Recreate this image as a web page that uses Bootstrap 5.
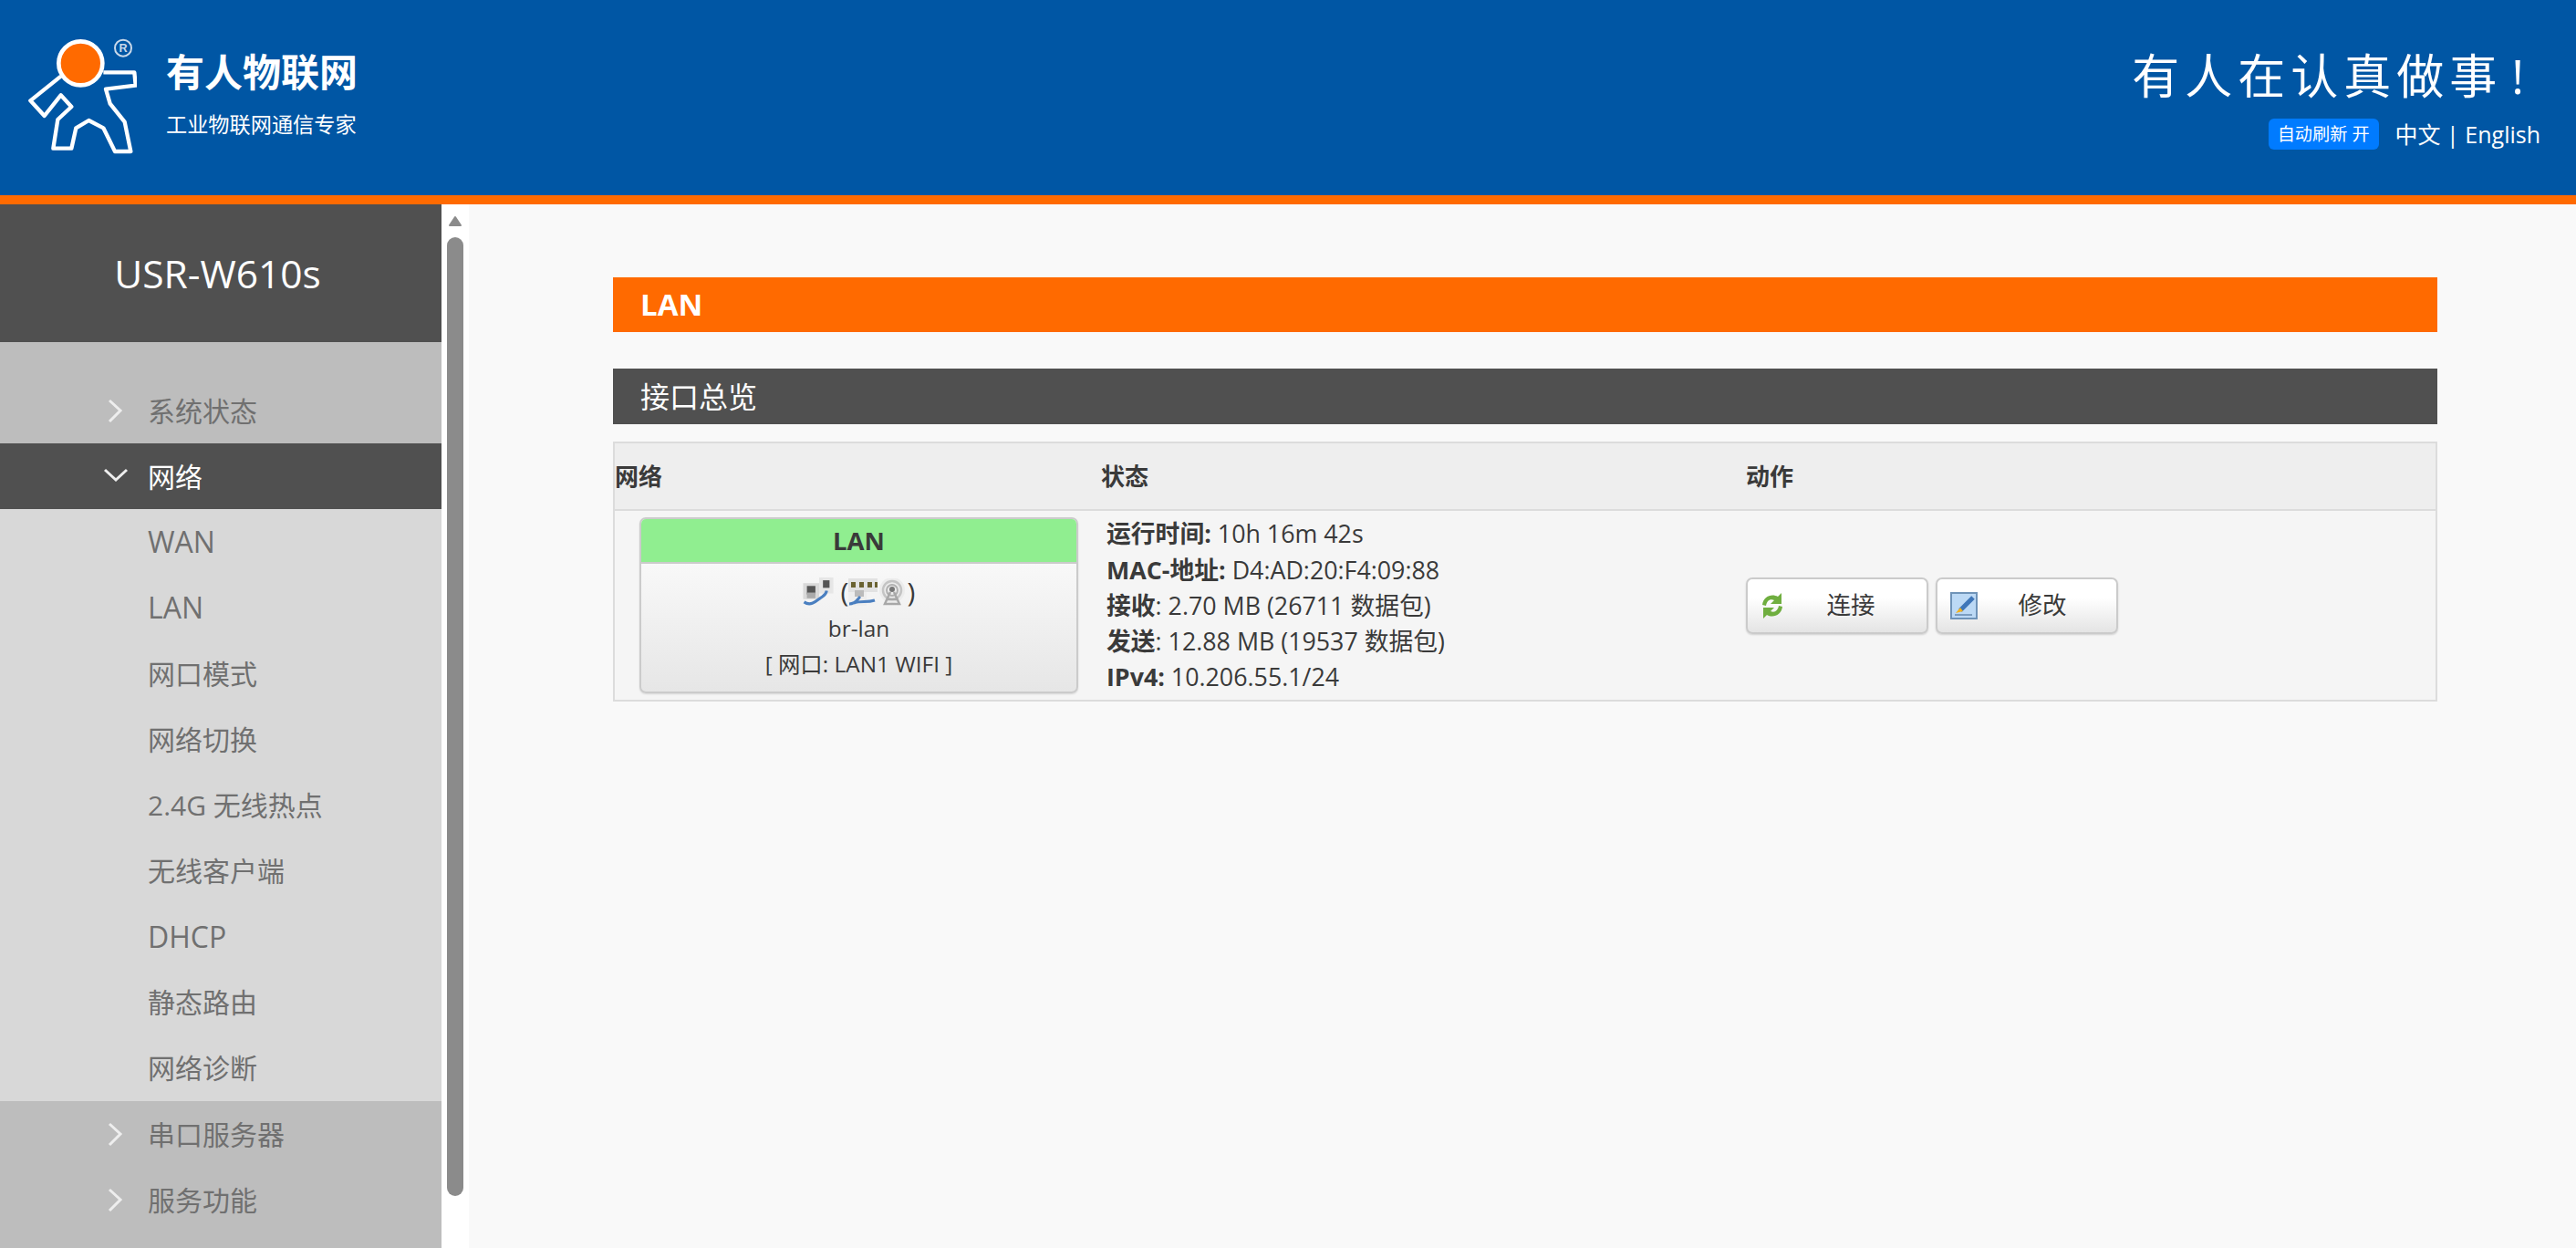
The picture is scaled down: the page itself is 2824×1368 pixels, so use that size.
<!DOCTYPE html>
<html lang="zh-CN">
<head>
    <meta charset="UTF-8">
    <title>USR-W610s - LAN</title>
    <meta name="viewport" content="width=device-width, initial-scale=1">
    <link href="https://cdn.jsdelivr.net/npm/bootstrap@5.3.3/dist/css/bootstrap.min.css" rel="stylesheet">
    <style>
        body {
            background: #f9f9f9;
            font-family: "Open Sans", "Noto Sans CJK SC", sans-serif;
            color: #3a3a3a;
            height: 100vh;
            overflow: hidden;
        }
        .top-bar {
            height: 224px;
            background: #0056a4;
            border-bottom: 10px solid #ff6a00;
            color: #fff;
        }
        .logo-box { padding: 42px 0 0 30px; }
        .logo-text { margin-left: 32px; padding-top: 6px; }
        .logo-name { font-size: 42px; font-weight: 700; line-height: 58px; font-family: "Noto Sans CJK SC", sans-serif; }
        .logo-sub { font-size: 23.2px; line-height: 30px; margin-top: 14px; font-family: "Noto Sans CJK SC", sans-serif; }
        .slogan-box { padding: 48px 39px 0 0; }
        .slogan { font-size: 52px; line-height: 70px; letter-spacing: 6px; margin-right: 12px; }
        .slogan-mark { margin-left: 10px; }
        .refresh-tag {
            background: #007bff;
            border-radius: 6px;
            font-size: 19.2px;
            line-height: 34px;
            height: 34px;
            padding: 0 10px;
        }
        .lang-links { font-size: 25px; line-height: 34px; margin-left: 18px; }
        .top-row { margin-top: 12px; }
        .page-body { height: calc(100vh - 224px); }
        .side-menu { width: 484px; background: #bdbdbd; flex: none; }
        .side-title {
            height: 151px;
            padding-right: 7px;
            background: #505050;
            color: #fff;
            font-size: 42.5px;
        }
        .side-list { padding-top: 39px; }
        .menu-row {
            height: 72.1px;
            color: #707070;
            font-size: 30px;
            padding-left: 162px;
            position: relative;
        }
        .menu-row svg { position: absolute; left: 112px; top: 22px; }
        .menu-row.opened { background: #505050; color: #fff; }
        .menu-sub { background: #d8d8d8; }
        .latin-item { font-size: 32px; }
        .scroll-track { width: 30px; background: #fff; flex: none; padding: 12px 0 0 6px; }
        .scroll-up { width: 18px; height: 14px; display: block; }
        .scroll-thumb { width: 18px; height: 1051px; background: #8b8b8b; border-radius: 9px; margin-top: 10px; }
        .main-area { padding: 80px 152px 0 158px; min-width: 0; }
        .lan-title {
            height: 60px;
            background: #ff6a00;
            color: #fff;
            font-size: 33px;
            font-weight: 700;
            padding-left: 30px;
        }
        .section-title {
            height: 61px;
            margin-top: 40px;
            background: #505050;
            color: #fff;
            font-size: 32px;
            padding-left: 30px;
        }
        .net-table { margin: 19px 0 0; border: 2px solid #dcdcdc; table-layout: fixed; --bs-table-bg: #f5f5f5; color: #3a3a3a; }
        .net-table th {
            height: 74px;
            padding: 0;
            font-size: 26px;
            font-weight: 700;
            background: #eee;
            border-bottom: 2px solid #dcdcdc;
            vertical-align: middle;
        }
        .net-table td { padding: 0; border: 0; vertical-align: middle; background: #f5f5f5; }
        .col-net { width: 534px; }
        .col-state { width: 707px; }
        .iface-box {
            width: 481px;
            height: 193px;
            margin: 7px 0 7px 27px;
            border: 2px solid #cbcbcb;
            border-radius: 7px;
            overflow: hidden;
            text-align: center;
            background: linear-gradient(#fff, #e6e6e6);
            box-shadow: 0 1px 2px rgba(0,0,0,.12);
            font-size: 24.4px;
            line-height: 39px;
        }
        .iface-head {
            height: 49px;
            line-height: 47px;
            background: #90ee90;
            border-bottom: 2px solid #cbcbcb;
            font-size: 27.5px;
            font-weight: 700;
        }
        .iface-icons { height: 51px; padding-top: 10px; font-size: 30px; }
        .iface-icons svg { flex: none; filter: blur(.5px); }
        .state-lines { padding-left: 6px; font-size: 26.8px; line-height: 39.2px; }
        .act-btn {
            width: 200px;
            height: 62px;
            border: 2px solid #cbcbcb;
            border-radius: 7px;
            background: linear-gradient(#fff 35%, #e4e4e4);
            box-shadow: 0 1px 2px rgba(0,0,0,.15);
            color: #3a3a3a;
            font-size: 26.5px;
            padding: 0 0 0 14px;
        }
        .act-btn span { flex: 1; text-align: center; padding-right: 10px; }
        .act-btn svg { flex: none; filter: blur(.4px); }
    </style>
</head>
<body>
<header class="top-bar d-flex justify-content-between">
    <div class="logo-box d-flex align-items-start">
        <svg width="120" height="130" viewBox="90 125 360 390" fill="none">
            <path d="M340 237H442L446 280L348 292L362 340L410 400L430 497H378L340 420L292 395L250 420L235 487H175L190 392L235 350L200 312L146 380L100 330L200 250" stroke="#fff" stroke-width="13" stroke-linejoin="round"/>
            <circle cx="265" cy="207" r="72" fill="#ff6a00" stroke="#fff" stroke-width="14"/>
            <circle cx="405" cy="157" r="27" stroke="#c9d9ea" stroke-width="6"/>
            <text x="405" y="171" font-size="38" font-weight="700" fill="#c9d9ea" text-anchor="middle" font-family="Liberation Sans, sans-serif">R</text>
        </svg>
        <div class="logo-text">
            <div class="logo-name">有人物联网</div>
            <div class="logo-sub">工业物联网通信专家</div>
        </div>
    </div>
    <div class="slogan-box text-end">
        <div class="slogan">有人在认真做事<span class="slogan-mark">!</span></div>
        <div class="top-row d-flex justify-content-end align-items-center">
            <span class="refresh-tag">自动刷新 开</span>
            <span class="lang-links">中文 | English</span>
        </div>
    </div>
</header>

<div class="page-body d-flex">
    <aside class="side-menu">
        <div class="side-title d-flex align-items-center justify-content-center">USR-W610s</div>
        <nav class="side-list">
            <div class="menu-row d-flex align-items-center">
                <svg width="26" height="28" viewBox="0 0 26 28" fill="none" stroke="#eee" stroke-width="3"><path d="M8 3L20 14L8 26"/></svg>系统状态
            </div>
            <div class="menu-row opened d-flex align-items-center">
                <svg width="28" height="28" viewBox="0 0 28 28" fill="none" stroke="#eee" stroke-width="3"><path d="M3 7L15 18L27 7"/></svg>网络
            </div>
            <div class="menu-sub">
                <div class="menu-row latin-item d-flex align-items-center">WAN</div>
                <div class="menu-row latin-item d-flex align-items-center">LAN</div>
                <div class="menu-row d-flex align-items-center">网口模式</div>
                <div class="menu-row d-flex align-items-center">网络切换</div>
                <div class="menu-row d-flex align-items-center">2.4G 无线热点</div>
                <div class="menu-row d-flex align-items-center">无线客户端</div>
                <div class="menu-row latin-item d-flex align-items-center">DHCP</div>
                <div class="menu-row d-flex align-items-center">静态路由</div>
                <div class="menu-row d-flex align-items-center">网络诊断</div>
            </div>
            <div class="menu-row d-flex align-items-center">
                <svg width="26" height="28" viewBox="0 0 26 28" fill="none" stroke="#eee" stroke-width="3"><path d="M8 3L20 14L8 26"/></svg>串口服务器
            </div>
            <div class="menu-row d-flex align-items-center">
                <svg width="26" height="28" viewBox="0 0 26 28" fill="none" stroke="#eee" stroke-width="3"><path d="M8 3L20 14L8 26"/></svg>服务功能
            </div>
        </nav>
    </aside>
    <div class="scroll-track">
        <svg class="scroll-up" viewBox="0 0 18 14"><path d="M9 2L15 11H3Z" fill="#8b8b8b" stroke="#8b8b8b" stroke-width="2" stroke-linejoin="round"/></svg>
        <div class="scroll-thumb"></div>
    </div>
    <main class="main-area flex-grow-1">
        <div class="lan-title d-flex align-items-center">LAN</div>
        <div class="section-title d-flex align-items-center">接口总览</div>
        <table class="table net-table">
            <thead>
                <tr>
                    <th class="col-net">网络</th>
                    <th class="col-state">状态</th>
                    <th>动作</th>
                </tr>
            </thead>
            <tbody>
                <tr>
                    <td>
                        <div class="iface-box">
                            <div class="iface-head">LAN</div>
                            <div class="iface-icons d-flex justify-content-center align-items-center">
                                <!-- two ethernet sockets with a blue cable -->
                                <svg width="34" height="31" viewBox="0 0 32 30">
                                    <rect x="0" y="6" width="17" height="17" fill="#d9d9d9"/>
                                    <rect x="17" y="0" width="15" height="17" fill="#e6e6e6"/>
                                    <rect x="4" y="9" width="9" height="9" fill="#555"/>
                                    <rect x="21" y="3" width="7" height="8" fill="#555"/>
                                    <rect x="4" y="16" width="9" height="6" fill="#aaa"/>
                                    <path d="M1 26C8 31 14 25 18 22S24 19 25 14" fill="none" stroke="#4a7fc0" stroke-width="3"/>
                                </svg>
                                <span>&nbsp;(</span>
                                <!-- switch with ports and cable -->
                                <svg width="32" height="30" viewBox="0 0 32 30">
                                    <rect x="0" y="0" width="32" height="15" fill="#e2e2e2"/>
                                    <rect x="0" y="15" width="20" height="15" fill="#eee"/>
                                    <rect x="3" y="4" width="5" height="6" fill="#6a6231"/>
                                    <rect x="12" y="4" width="5" height="6" fill="#6a6231"/>
                                    <rect x="21" y="4" width="5" height="6" fill="#6a6231"/>
                                    <rect x="29" y="4" width="3" height="6" fill="#6a6231"/>
                                    <rect x="7" y="13" width="10" height="7" fill="#bbb"/>
                                    <path d="M1 28C8 28 10 23 13 20M6 27C14 24 20 27 29 24" fill="none" stroke="#4a7fc0" stroke-width="3"/>
                                </svg>
                                <!-- wireless radio mast -->
                                <svg width="32" height="30" viewBox="0 0 32 30" fill="none">
                                    <circle cx="16" cy="13" r="14" fill="#ececec"/>
                                    <circle cx="16" cy="13" r="10" stroke="#c4c4c4" stroke-width="2.5"/>
                                    <circle cx="16" cy="13" r="6" stroke="#b0b0b0" stroke-width="2"/>
                                    <circle cx="16" cy="12" r="3" fill="#777"/>
                                    <path d="M14 15L8 28H24L18 15M11 23H21" stroke="#a8a8a8" stroke-width="2.5"/>
                                </svg>
                                <span>)</span>
                            </div>
                            <div>br-lan</div>
                            <div>[ 网口: LAN1 WIFI ]</div>
                        </div>
                    </td>
                    <td>
                        <div class="state-lines">
                            <div><strong>运行时间:</strong> 10h 16m 42s</div>
                            <div><strong>MAC-地址:</strong> D4:AD:20:F4:09:88</div>
                            <div><strong>接收</strong>: 2.70 MB (26711 数据包)</div>
                            <div><strong>发送</strong>: 12.88 MB (19537 数据包)</div>
                            <div><strong>IPv4:</strong> 10.206.55.1/24</div>
                        </div>
                    </td>
                    <td>
                        <div class="d-flex gap-2">
                            <button type="button" class="btn act-btn d-flex align-items-center">
                                <svg width="26" height="30" viewBox="0 0 26 30" fill="none">
                                    <path d="M2 14C3 5 12 1 19 5L23 1V13H11L15 9C10 7 7 10 6 15Z" fill="#6fae3f"/>
                                    <path d="M24 16C23 25 14 29 7 25L3 29V17H15L11 21C16 23 19 20 20 15Z" fill="#6fae3f"/>
                                </svg>
                                <span>连接</span>
                            </button>
                            <button type="button" class="btn act-btn d-flex align-items-center">
                                <svg width="30" height="30" viewBox="0 0 30 30" fill="none">
                                    <rect x="1" y="1" width="28" height="28" fill="#bcd9f5" stroke="#6f93b8" stroke-width="2"/>
                                    <path d="M25 6L11 20" stroke="#3f76b8" stroke-width="5"/>
                                    <path d="M11 17L6 23L14 21Z" fill="#f2b11f"/>
                                    <path d="M5 25H24" stroke="#7b9cbf" stroke-width="2"/>
                                </svg>
                                <span>修改</span>
                            </button>
                        </div>
                    </td>
                </tr>
            </tbody>
        </table>
    </main>
</div>
<script src="https://cdn.jsdelivr.net/npm/bootstrap@5.3.3/dist/js/bootstrap.bundle.min.js"></script>
</body>
</html>
